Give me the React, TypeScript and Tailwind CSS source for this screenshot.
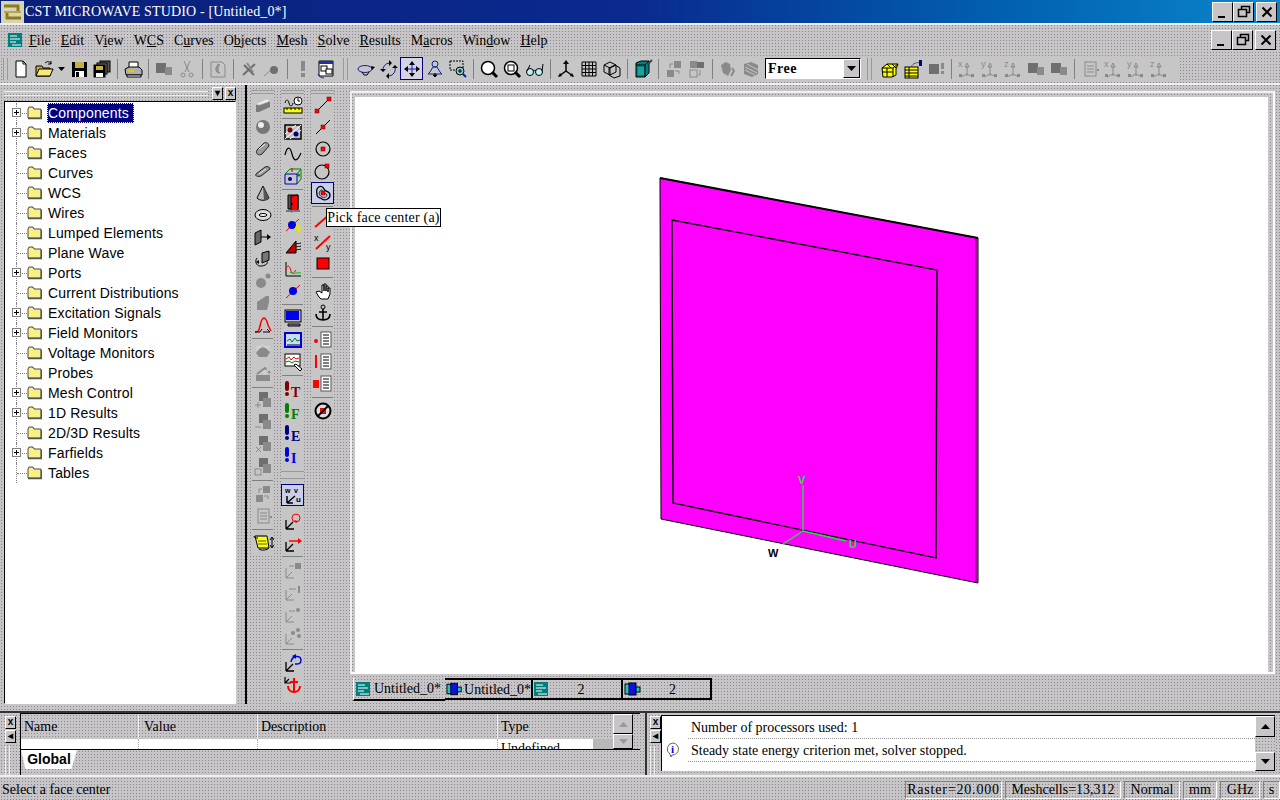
import type { ReactNode } from "react";

const dither = "bg-[#c8c5c8] bg-[radial-gradient(#8a878a_0.8px,transparent_0.9px)] bg-[length:3px_3px]";
const toolBg = "bg-[#c6c6c6] bg-[radial-gradient(#eef8ee_0.5px,transparent_0.6px)] bg-[length:6px_6px]";
const raised = "border border-t-white border-l-white border-r-black border-b-black";
const serif = "font-['Liberation_Serif',serif]";
const sans = "font-['Liberation_Sans',sans-serif]";

const S = ({ children, w = 20 }: { children: ReactNode; w?: number }) => (
    <svg width={w} height={20} viewBox={`0 0 ${w} 20`} fill="none" stroke="#000" strokeWidth={1}>
        {children}
    </svg>
);

const G = "#8a8a8a";
const D = "#6f6f6f";

// disabled two-square glyph used all over the grey buttons
const Grey = ({ kind = 0 }: { kind?: number }) => (
    <S>
        {kind === 0 && <><rect x="8" y="3" width="9" height="8" fill={G} stroke="none" /><rect x="3" y="8" width="9" height="9" fill={D} stroke="none" /></>}
        {kind === 1 && <><rect x="10" y="2" width="7" height="7" fill={G} stroke="none" /><rect x="3" y="11" width="7" height="7" fill={G} stroke="none" /><path d="M6 9V5h3M11 12h4v3" stroke={G} /></>}
        {kind === 2 && <><rect x="3" y="2" width="7" height="7" fill={G} stroke="none" /><rect x="10" y="3" width="7" height="6" fill={D} stroke="none" /><rect x="3" y="11" width="7" height="7" stroke={G} /><path d="M13 11v5h-2" stroke={G} /></>}
        {kind === 3 && <><path d="M3 6l5-3 4 2 1 6-3 6-5-3z" fill={G} stroke="none" /><path d="M14 9l2 3-3 5" stroke={G} strokeWidth={2} /></>}
        {kind === 4 && <><path d="M3 5l7-2 7 3v9l-6 3-8-3z" fill={G} stroke="none" /><path d="M4 8l12 6M4 11l10 5M6 5l11 6" stroke="#c6c6c6" /></>}
        {kind === 5 && <><rect x="2" y="4" width="10" height="10" fill={D} stroke="none" /><rect x="11" y="8" width="7" height="8" fill={G} stroke="none" /></>}
        {kind === 6 && <><rect x="5" y="3" width="11" height="14" stroke={G} /><path d="M7 7h7M7 10h7M7 13h7" stroke={G} /><rect x="17" y="10" width="2" height="2" fill={G} stroke="none" /></>}
    </S>
);

const GreyAxes = ({ l }: { l: string }) => (
    <S>
        <path d="M10 17V7M10 4l-2 4h4zM10 15l-6 3M10 15l6 3" stroke={G} />
        <rect x="2" y="15" width="3" height="3" fill={G} stroke="none" />
        <rect x="14" y="15" width="3" height="3" fill={G} stroke="none" />
        <text x="1" y="8" fontSize="9" fill={G} stroke="none" fontFamily="Liberation Sans">{l}</text>
    </S>
);

const Doc = () => <S><path d="M5 2h7l3 3v13H5z" fill="#fff" /><path d="M12 2v3h3" /></S>;
const Open = () => (
    <S>
        <path d="M2 7h6l1 2h7v8H2z" fill="#c8b040" />
        <path d="M2 17l3-7h14l-3 7z" fill="#f8e878" />
        <path d="M11 4c2-2 5-2 6 1M17 2v3h-3" stroke="#000" />
    </S>
);
const Save = () => (
    <S>
        <rect x="3" y="3" width="15" height="15" fill="#000" stroke="none" />
        <rect x="6" y="3" width="9" height="6" fill="#c8b040" stroke="none" />
        <rect x="6" y="12" width="9" height="6" fill="#fff" stroke="none" />
        <rect x="7" y="13" width="3" height="5" fill="#000" stroke="none" />
    </S>
);
const SaveAll = () => (
    <S>
        <rect x="8" y="2" width="10" height="11" fill="#555" />
        <rect x="5" y="4" width="10" height="11" fill="#777" />
        <rect x="2" y="6" width="11" height="12" fill="#000" />
        <rect x="4" y="7" width="7" height="4" fill="#c8b040" stroke="none" />
        <rect x="4" y="14" width="7" height="4" fill="#fff" stroke="none" />
    </S>
);
const Print = () => (
    <S>
        <path d="M6 3h9v6H6z" fill="#fff" />
        <path d="M2 10l4-2h10l3 3v5H3z" fill="#b0b0b0" />
        <rect x="5" y="11" width="6" height="2" fill="#d8d000" stroke="none" />
        <path d="M4 16h14v2H4z" fill="#fff" />
    </S>
);
const Scissors = () => <S><path d="M7 2l5 11M13 2L8 13" stroke={G} /><circle cx="6" cy="16" r="2" stroke={G} /><circle cx="14" cy="16" r="2" stroke={G} /></S>;
const UndoDoc = () => <S><path d="M3 3h11l3 3v12H3z" stroke={G} /><path d="M12 6a4 4 0 1 0 0 8M10 5v8" stroke={G} strokeWidth={1.5} /></S>;
const GX = () => <S><path d="M4 16L16 5M5 6l10 10" stroke={D} strokeWidth={2} /><path d="M8 4l6 9" stroke={G} strokeWidth={2} /></S>;
const GArrow = () => <S><path d="M2 17l8-7" stroke={G} /><circle cx="12" cy="11" r="4" fill={D} stroke="none" /></S>;
const GBang = () => <S><rect x="8" y="2" width="4" height="10" fill={G} stroke="none" /><rect x="8" y="14" width="4" height="4" fill={G} stroke="none" /></S>;
const Nodes = () => (
    <S>
        <path d="M3 2h14v15H3z" fill="#fff" stroke="#000" />
        <path d="M3 2h14v3H3z" fill="#2030a0" stroke="none" />
        <rect x="5" y="7" width="6" height="5" fill="#fff" />
        <rect x="10" y="10" width="6" height="5" fill="#fff" />
        <path d="M2 15c1 3 4 4 6 4" stroke="#2030a0" />
    </S>
);
const Orbit = () => (
    <S>
        <ellipse cx="9" cy="10" rx="7" ry="3.5" stroke="#1020a0" />
        <path d="M6 13l2 3h3l2-3" stroke="#000" />
        <path d="M15 7l4 1-3 3z" fill="#000" stroke="none" />
    </S>
);
const Rot = () => <S><path d="M4 12a7 7 0 0 1 6-8M16 8a7 7 0 0 1-6 9" stroke="#1020a0" /><path d="M10 1v6l3-3zM10 14v6l-3-3zM1 10h6l-3 3zM13 9l6 0-3-3z" fill="#000" stroke="none" /></S>;
const Move = () => (
    <S>
        <path d="M10 2l3 4H7zM10 18l3-4H7zM2 10l4-3v6zM18 10l-4-3v6z" fill="#000" stroke="none" />
        <path d="M10 5v10M5 10h10" stroke="#1020a0" />
    </S>
);
const Pawn = () => <S><circle cx="10" cy="5" r="3" stroke="#1020a0" /><path d="M8 8h4l3 5 2 2H3l2-2z" stroke="#1020a0" /><path d="M10 14v4l-2-2h4l-2 2" fill="#000" /></S>;
const ZoomBox = () => <S><rect x="2" y="2" width="13" height="9" strokeDasharray="2 1" /><circle cx="12" cy="12" r="4" fill="#80d0d0" /><path d="M10 12h4M12 10v4" /><path d="M15 15l3 3" stroke="#1020a0" strokeWidth={2} /></S>;
const Glass = () => <S><circle cx="9" cy="9" r="6.5" fill="#fff" strokeWidth={1.5} /><path d="M13 13l5 5" strokeWidth={3} /></S>;
const GlassFit = () => <S><circle cx="9" cy="9" r="6.5" fill="#fff" strokeWidth={1.5} /><rect x="6" y="6" width="6" height="6" /><path d="M13 13l5 5" strokeWidth={3} /></S>;
const Specs = () => <S><circle cx="5" cy="13" r="3.5" fill="#bfefef" /><circle cx="14" cy="13" r="3.5" fill="#bfefef" /><path d="M8 12c1-1 2-1 3 0M2 12l3-6M17 12l1-7" /></S>;
const Axes3 = () => <S><path d="M10 12V3M10 12l-7 5M10 12l7 5" strokeWidth={1.5} /><path d="M10 1l-3 4h6zM2 18l2-4 2 3zM18 18l-2-4-2 3z" fill="#000" stroke="none" /></S>;
const Grid = () => <S><path d="M3 3h14v14H3zM3 6.500h14M3 10h14M3 13.500h14M6.500 3v14M10 3v14M13.500 3v14" /></S>;
const Cubes = () => <S><path d="M2 6l6-3 6 3v7l-6 3-6-3zM2 6l6 3 6-3M8 9v7" /><path d="M7 9l6-3 5 3v8l-6 2-5-3z" /></S>;
const TealCube = () => <S><path d="M3 4l5-2h8v12l-4 4H3z" fill="#008080" /><path d="M3 6h9v12M12 6l4-4" /><path d="M15 5l4-4" stroke="#444" strokeWidth={2} /><rect x="5" y="8" width="6" height="8" fill="#20a0a0" stroke="none" /></S>;
const YellowCubes = () => <S><path d="M2 9l5-4h11l-2 5v6l-4 2H3z" fill="#ffff00" /><path d="M2 9h11v9M13 9l5-4M2 13h11M7 9v9M7 5l4 4M12 5l4 4" /></S>;
const YellowSheet = () => <S><rect x="2" y="8" width="13" height="11" fill="#ffff00" /><path d="M2 11h13M2 14h13M2 17h13M6 8v11" /><path d="M8 8c2-4 6-5 9-4" stroke="#555" /><rect x="16" y="1" width="3" height="6" fill="#000090" stroke="none" /></S>;
const GreyBang = () => <S><rect x="3" y="5" width="10" height="10" fill={D} stroke="none" /><rect x="15" y="4" width="3" height="6" fill={G} stroke="none" /><rect x="15" y="12" width="3" height="3" fill={G} stroke="none" /></S>;

// modeling column
const Box = () => <S><path d="M3 9l11-5 3 2v6L6 17H3z" fill="#7a7a7a" stroke="none" /><path d="M3 9l11-5 3 2-11 4z" fill="#f4f4f4" stroke="#ccc" /></S>;
const Ball = () => <S><circle cx="10" cy="10" r="7" fill="#777" stroke="none" /><circle cx="8" cy="8" r="3" fill="#eee" stroke="none" /></S>;
const Cyl = () => <S><path d="M4 11l7-7c2-1 5 0 5 3l-7 8c-3 2-7 0-5-4z" fill="#9a9a9a" stroke="#222" /><path d="M6 10l6-5" stroke="#eee" /></S>;
const Cyl2 = () => <S><path d="M3 13l9-7c3-1 5 0 5 2l-9 7c-4 1-6 0-5-2z" fill="#9a9a9a" stroke="#222" /><path d="M6 13l7-5" stroke="#eee" /></S>;
const Cone = () => <S><path d="M10 3l6 12c-2 3-10 3-12 0z" fill="#bbb" /><path d="M10 3l6 12c-2 2-4 2-5 2z" fill="#555" stroke="none" /></S>;
const Torus = () => <S><ellipse cx="10" cy="10" rx="8" ry="5.500" fill="#ddd" /><ellipse cx="10" cy="10" rx="4" ry="1.500" fill="#fff" /></S>;
const Extrude = () => <S><path d="M2 6l6-3v12l-6 3z" fill="#666" /><path d="M8 10h8" /><path d="M18 10l-4-3v6z" fill="#000" stroke="none" /></S>;
const Revolve = () => <S><path d="M9 4l7-2v9l-7 3z" fill="#777" /><path d="M4 9c-3 4 0 9 5 8s6-3 5-5" /><path d="M3 13l3-2v4z" fill="#000" stroke="none" /></S>;
const GDots = () => <S><circle cx="8" cy="12" r="5" fill={G} stroke="none" /><circle cx="15" cy="5" r="2.500" fill={G} stroke="none" /></S>;
const GShape = () => <S><path d="M4 17V9l9-6h3v6l-2 8z" fill={G} stroke="none" /></S>;
const Loft = () => <S><path d="M2 17c3 0 4-1 5-6s2-8 4-8 3 3 4 7l3 6" stroke="#f00" strokeWidth={1.5} /><path d="M2 17h5l2-3M10 17h7l-3-3" /></S>;
const GBoolA = () => <S><path d="M3 11l7-8 7 7-3 5H6z" fill={G} stroke="none" /><path d="M3 5h14M3 8l7-5 7 6" stroke="#ddd" /></S>;
const GBoolB = () => <S><path d="M3 11h14v6H3z" fill={G} stroke="none" /><path d="M4 10l8-6 5 5" stroke={G} strokeWidth={2} /><path d="M9 9l6-4M11 10l5-4" stroke="#ddd" /></S>;
const GStack = ({ m }: { m?: string }) => (
    <S>
        <rect x="6" y="1" width="9" height="9" fill={D} stroke="none" />
        <rect x="10" y="7" width="8" height="9" fill={G} stroke="none" />
        {m === "+" && <path d="M2 14h6M5 11v6" stroke={G} />}
        {m === "-" && <path d="M2 14h6" stroke={G} />}
        {m === "x" && <path d="M3 12l5 5M8 12l-5 5" stroke={G} />}
        {m === "o" && <rect x="2" y="12" width="6" height="6" stroke={G} />}
    </S>
);
const Scroll = () => <S w={22}><path d="M3 3h12l2 12H6z" fill="#ffff00" /><path d="M2 3c0 2 2 2 4 2M7 16c2 2 9 1 10-1" /><path d="M3 3h12M6 8h8M6 11h9" stroke="#555" /><path d="M20 5v9M18 7l2-3 2 3M18 12l2 3 2-3" stroke="#000" /></S>;

// solver column
const Ruler = () => <S w={22}><path d="M3 8c1-4 3-4 4 0s3 4 4 0" /><circle cx="16" cy="6" r="4" fill="#fff" /><path d="M16 3v3h2" /><rect x="2" y="13" width="18" height="5" fill="#ffff00" /><path d="M5 13v2M9 13v2M13 13v2M17 13v2" /></S>;
const Slash = () => <S><rect x="2" y="3" width="16" height="14" fill="#c0c0c0" strokeWidth={1.5} /><path d="M2 17L18 3M2 12L13 3M7 17L18 8" stroke="#fff" /><circle cx="7" cy="8" r="2.500" fill="#800000" stroke="none" /><circle cx="13" cy="12" r="2.500" fill="#000080" stroke="none" /></S>;
const Wave = () => <S><path d="M2 11c2-9 5-9 7-1s5 8 9-1" strokeWidth={1.2} /></S>;
const Cube3 = () => <S><path d="M2 8h12v10H2z" stroke="#0000c0" /><path d="M2 8l5-5h11l-4 5M14 18l4-5V3" stroke="#008000" /><circle cx="7" cy="13" r="2" fill="#000080" stroke="none" /><circle cx="15.500" cy="9" r="1.500" fill="#008000" stroke="none" /><path d="M9 2v4" stroke="#c00000" /></S>;
const Door = () => <S><path d="M5 2h10v14H5z" fill="#555" /><path d="M8 3l7-1v15l-7 2z" fill="#f00" stroke="#000" /><circle cx="9" cy="11" r="1" fill="#000" stroke="none" /><path d="M3 18h14" stroke="#777" strokeWidth={2} /></S>;
const Port = () => <S><path d="M3 16L16 4" stroke="#f00" /><circle cx="9" cy="10" r="4" fill="#0000e0" stroke="none" /><path d="M15 9l-2 4h4l-2 5" stroke="#e8e800" strokeWidth={2} /></S>;
const Mono = () => <S><path d="M3 16L13 4v12z" fill="#c00000" stroke="#000" /><path d="M13 7c2-1 3 0 5-1M13 10c2-1 3 0 5-1M13 13c2-1 3 0 5-1" /></S>;
const Probe = () => <S><path d="M3 3v14h15" /><path d="M3 10c2-6 4-2 5 2s3 2 5-1" stroke="#f00" /><path d="M7 13c3 3 6 0 11 1" stroke="#00c000" /></S>;
const PortB = () => <S><path d="M3 17L17 4" stroke="#f00" /><circle cx="10" cy="10" r="4" fill="#0000e0" stroke="none" /></S>;
const Monitor = () => <S><rect x="2" y="2" width="16" height="12" fill="#c0c0c0" /><rect x="3" y="3" width="13" height="9" fill="#0000f0" stroke="none" /><path d="M5 16h12v2H5z" fill="#888" /></S>;
const Scope = () => <S><rect x="2" y="3" width="16" height="14" fill="#c8dcff" stroke="#0000e0" strokeWidth={2} /><path d="M4 11l3-2 2 3 3-4 2 3 3-1" stroke="#008000" /><path d="M4 15h13" stroke="#000" /></S>;
const ScopePick = () => <S><rect x="2" y="2" width="15" height="12" fill="#fff" /><path d="M3 7l3-2 2 3 3-3 2 2 3-1" stroke="#f00" /><path d="M3 10l3-1 3 2 3-2 4 1" stroke="#008000" /><path d="M11 13l6 6 2-2-6-5z" fill="#fff" /></S>;
const Run = ({ l, c }: { l: string; c: string }) => (
    <S>
        <rect x="2" y="2" width="4" height="10" rx="2" fill={c} stroke="none" />
        <circle cx="4" cy="15" r="2" fill={c} stroke="none" />
        <text x="8" y="18" fontSize="14" fontWeight="bold" fontFamily="Liberation Serif" fill={c} stroke="none">{l}</text>
    </S>
);
const Wcs = () => <S><path d="M4 18l8-7M4 18h6M4 18v-7" strokeWidth={1.5} /><text x="2" y="8" fontSize="7" fill="#000" stroke="none" fontFamily="Liberation Sans" fontWeight="bold">w</text><text x="11" y="8" fontSize="7" fill="#000" stroke="none" fontFamily="Liberation Sans" fontWeight="bold">v</text><text x="13" y="17" fontSize="8" fill="#000" stroke="none" fontFamily="Liberation Sans" fontWeight="bold">u</text></S>;
const LocalAxes = ({ children }: { children: ReactNode }) => <S><path d="M3 18h8M3 18V9M3 18l7-7" strokeWidth={1.3} />{children}</S>;
const GAxes = ({ children }: { children: ReactNode }) => <S><path d="M3 18h8M3 18V8M3 18l6-6" stroke={G} />{children}</S>;
const Anchor = ({ c = "#000" }: { c?: string }) => <S><circle cx="10" cy="4" r="2" stroke={c} /><path d="M10 6v11M6 9h8M3 11c0 4 3 6 7 6s7-2 7-6" stroke={c} strokeWidth={1.6} /></S>;

// pick column
const Dot = ({ x, y }: { x: number; y: number }) => <rect x={x - 2} y={y - 2} width="4" height="4" fill="#f00" stroke="#600" strokeWidth={0.5} />;
const PickLine = () => <S><path d="M4 16L16 4" /><Dot x={4} y={16} /><Dot x={16} y={4} /></S>;
const PickMid = () => <S><path d="M3 17L17 3" /><Dot x={10} y={10} /></S>;
const PickCircle = () => <S><circle cx="10" cy="10" r="7" strokeWidth={1.2} /><Dot x={10} y={10} /></S>;
const PickEdge = () => <S><circle cx="9" cy="11" r="7" strokeWidth={1.2} /><Dot x={14} y={5} /></S>;
const PickFace = () => <S><path d="M4 6c2-4 6-3 7 0s6 2 6 6-5 6-8 4-5-1-5-4-1-3 0-6z" strokeWidth={1.3} /><path d="M7 8c1-2 3-1 3 1s4 1 4 3-3 3-5 2-4-3-2-6z" strokeWidth={0.8} /><Dot x={10} y={10} /></S>;
const RedLine = () => <S><path d="M2 17L16 5" stroke="#f00" strokeWidth={2} /></S>;
const XY = () => <S><path d="M3 17L17 4" stroke="#f00" strokeWidth={2} /><text x="1" y="9" fontSize="9" fill="#000" stroke="none" fontFamily="Liberation Sans">x</text><text x="13" y="18" fontSize="9" fill="#000" stroke="none" fontFamily="Liberation Sans">y</text></S>;
const RedSq = () => <S><rect x="4" y="4" width="12" height="11" fill="#f00" /></S>;
const Hand = () => <S><path d="M3 11l3 5 2 2h7l2-5V7h-2v4-6h-2v5V3h-2v7V4H9v8L6 10z" fill="#fff" /></S>;
const List = ({ m }: { m: number }) => (
    <S>
        {m === 0 && <circle cx="3" cy="11" r="2" fill="#f00" stroke="none" />}
        {m === 1 && <rect x="2" y="3" width="2" height="13" fill="#f00" stroke="none" />}
        {m === 2 && <rect x="0" y="6" width="6" height="8" fill="#f00" stroke="none" />}
        <rect x="8" y="2" width="10" height="15" fill="#fff" stroke="#555" />
        <path d="M10 5h6M10 8h6M10 11h6M10 14h6" />
    </S>
);
const NoGo = () => <S><circle cx="10" cy="10" r="7.500" fill="#ddd" strokeWidth={2} /><rect x="7" y="7" width="6" height="6" fill="#f00" stroke="none" /><path d="M5 15L15 5" strokeWidth={1.8} /></S>;

const Cell = ({ children, on }: { children: ReactNode; on?: boolean }) => (
    <div className={`flex h-[22px] w-[23px] items-center justify-center ${on ? "border border-[#000080] bg-[#c9cfe8]" : ""}`}>
        {children}
    </div>
);
const Sep = () => <div className="mx-[1px] my-[2px] h-px bg-[#808080]" />;
const Grip = () => <div className="h-[4px] border-y border-[#999]" />;

type Item = ReactNode | null;

const col1: Item[] = [<Box />, <Ball />, <Cyl />, <Cyl2 />, <Cone />, <Torus />, <Extrude />, <Revolve />, <GDots />, <GShape />, <Loft />, null, <GBoolA />, <GBoolB />, null, <GStack m="+" />, <GStack m="-" />, <GStack m="x" />, <GStack m="o" />, null, <Grey kind={1} />, <Grey kind={6} />, null, <Scroll />];
const col2Top: Item[] = [<Ruler />, null, <Slash />, <Wave />, <Cube3 />, null, <Door />, <Port />, <Mono />, <Probe />, <PortB />, null, <Monitor />, <Scope />, <ScopePick />, null, <Run l="T" c="#800000" />, <Run l="F" c="#008000" />, <Run l="E" c="#000080" />, <Run l="I" c="#0000e0" />];
const col2Bottom: Item[] = [
    <LocalAxes><circle cx="13" cy="7" r="4" stroke="#f00" /><path d="M11 9l4 1-2 2z" fill="#f00" stroke="none" /></LocalAxes>,
    <LocalAxes><path d="M6 8h11" stroke="#f00" strokeWidth={1.5} /><path d="M19 8l-4-3v6z" fill="#f00" stroke="none" /></LocalAxes>,
    null,
    <GAxes><rect x="12" y="3" width="6" height="6" fill={G} stroke="none" /><path d="M6 6h5" stroke={G} /></GAxes>,
    <GAxes><rect x="15" y="4" width="2" height="7" fill={G} stroke="none" /><path d="M6 7h7" stroke={G} /></GAxes>,
    <GAxes><circle cx="15" cy="6" r="2" fill={G} stroke="none" /><path d="M6 7h6" stroke={G} /></GAxes>,
    <GAxes><circle cx="10" cy="7" r="2" fill={G} stroke="none" /><circle cx="15" cy="4" r="2" fill={G} stroke="none" /><circle cx="16" cy="10" r="2" fill={G} stroke="none" /></GAxes>,
    null,
    <LocalAxes><path d="M8 9c1-7 10-7 10-2s-4 4-6 4" stroke="#0000e0" strokeWidth={1.5} /><path d="M9 3l4-2v5z" fill="#0000e0" stroke="none" /></LocalAxes>,
    <S><path d="M2 2v6h6M2 8l4-4" strokeWidth={1.2} /><path d="M11 3v13M7 7h8M5 11c0 4 3 6 6 6s6-2 6-6" stroke="#f00" strokeWidth={2} /></S>,
];
const col3: Item[] = [<PickLine />, <PickMid />, <PickCircle />, <PickEdge />, <PickFace />, null, <RedLine />, <XY />, <RedSq />, null, <Hand />, <Anchor />, null, <List m={0} />, <List m={1} />, <List m={2} />, null, <NoGo />];

const Col = ({ items, active }: { items: Item[]; active?: number }) => (
    <>
        {items.map((it, i) => (it === null ? <Sep key={i} /> : <Cell key={i} on={i === active}>{it}</Cell>))}
    </>
);

const TbSep = () => <div className="mx-[3.5px] h-[20px] w-px bg-[#808080]" />;
const Tb = ({ children, on }: { children: ReactNode; on?: boolean }) => (
    <div className={`flex h-[23px] w-[23px] shrink-0 items-center justify-center ${on ? "border border-[#000080] bg-[#d4d4e4]" : ""}`}>
        {children}
    </div>
);
const VGrip = () => <div className="mx-[6px] h-[22px] w-[5px] border-x border-[#999]" />;

const WinBtn = ({ kind }: { kind: "min" | "max" | "close" }) => (
    <div className={`flex h-[20px] w-[21px] items-center justify-center bg-[#c8c5c8] ${raised}`}>
        <svg width="14" height="14" viewBox="0 0 14 14" fill="none" stroke="#000" strokeWidth="1.5">
            {kind === "min" && <path d="M2 12h7" strokeWidth="2" />}
            {kind === "max" && <><path d="M4.500 4V1.500h8v6H10" /><rect x="1.500" y="4.500" width="8" height="7" /></>}
            {kind === "close" && <path d="M2.500 2.500l9 9M11.500 2.500l-9 9" strokeWidth="2" />}
        </svg>
    </div>
);

const Folder = () => (
    <svg width="15" height="14" viewBox="0 0 15 14" stroke="#000" strokeWidth="0.7">
        <path d="M1 3l1-2h4l1 2h7v9H1z" fill="#f8f088" />
        <path d="M1 12.500h13.500V4" fill="none" stroke="#555" strokeWidth="1.4" />
    </svg>
);

const TreeRow = ({ label, plus, sel }: { label: string; plus?: boolean; sel?: boolean }) => (
    <div className="flex h-5 items-center">
        <div className="relative ml-[11px] flex h-5 w-[11px] items-center border-l border-dotted border-[#808080]">
            <div className="h-px w-full border-t border-dotted border-[#808080]" />
            {plus && (
                <div className="absolute left-[-5px] top-[5px] flex h-[9px] w-[9px] items-center justify-center border border-[#808080] bg-white text-[#000]">
                    <div className="relative h-[5px] w-[5px]">
                        <div className="absolute left-0 top-[2px] h-px w-[5px] bg-black" />
                        <div className="absolute left-[2px] top-0 h-[5px] w-px bg-black" />
                    </div>
                </div>
            )}
        </div>
        <div className="flex w-[20px] items-center">
            <Folder />
        </div>
        <span className={`border pr-[4px] text-[14px] leading-[18px] tracking-[0.15px] ${sans} ${sel ? "border-dotted border-[#ffff80] bg-[#000080] text-white" : "border-transparent text-black"}`}>
            {label}
        </span>
    </div>
);

const treeItems = [
    { label: "Components", plus: true, sel: true },
    { label: "Materials", plus: true },
    { label: "Faces" },
    { label: "Curves" },
    { label: "WCS" },
    { label: "Wires" },
    { label: "Lumped Elements" },
    { label: "Plane Wave" },
    { label: "Ports", plus: true },
    { label: "Current Distributions" },
    { label: "Excitation Signals", plus: true },
    { label: "Field Monitors", plus: true },
    { label: "Voltage Monitors" },
    { label: "Probes" },
    { label: "Mesh Control", plus: true },
    { label: "1D Results", plus: true },
    { label: "2D/3D Results" },
    { label: "Farfields", plus: true },
    { label: "Tables" },
];

const TabIcon = ({ alt }: { alt?: boolean }) =>
    alt ? (
        <svg width="18" height="14" viewBox="0 0 18 14" stroke="#000">
            <rect x="1" y="2" width="5" height="10" fill="#20c0d0" />
            <rect x="5" y="1" width="7" height="12" fill="#1010e0" />
            <rect x="12" y="5" width="4" height="5" fill="#20c0d0" />
        </svg>
    ) : (
        <svg width="14" height="14" viewBox="0 0 14 14">
            <rect x="0" y="0" width="14" height="14" fill="#007f7f" />
            <path d="M2 3h7M2 6h10M2 9h6M4 12h9" stroke="#fff" />
        </svg>
    );

const DocTab = ({ label, alt, active, w }: { label: string; alt?: boolean; active?: boolean; w: string }) => (
    <div className={`flex items-center gap-[1px] text-[14px] text-black ${serif} ${w} ${active ? "h-[23px] gap-[4px] border-b-2 border-l border-b-black border-l-white px-[2px]" : "h-[22px] border-y-2 border-r-2 border-black pl-[1px]"}`}>
        <TabIcon alt={alt} />
        <span className={label === "2" ? "flex-1 pr-[8px] text-center" : "whitespace-nowrap"}>{label}</span>
    </div>
);

const SmallBtn = ({ label }: { label: string }) => (
    <div className={`flex h-[13px] w-[11px] items-center justify-center bg-[#c8c5c8] text-[10px] font-bold leading-none ${sans} ${raised}`}>
        {label}
    </div>
);

const ScrollBtn = ({ up, muted, h }: { up?: boolean; muted?: boolean; h: string }) => (
    <div className={`flex w-[20px] shrink-0 items-center justify-center bg-[#c8c5c8] ${h} ${raised}`}>
        <svg width="9" height="5" viewBox="0 0 9 5">
            <path d={up ? "M4.500 0L9 5H0z" : "M4.500 5L9 0H0z"} fill={muted ? "#999" : "#000"} />
        </svg>
    </div>
);

const StatusCell = ({ label, w }: { label: string; w: string }) => (
    <div className={`flex h-[18px] items-center justify-center border-l border-t border-l-[#808080] border-t-[#808080] border-r border-b border-r-white border-b-white text-[14px] ${w}`}>
        {label}
    </div>
);

export default function App() {
    return (
        <div className={`flex h-[800px] w-[1280px] flex-col overflow-hidden ${dither} ${serif} text-black`}>
            {/* Title bar */}
            <div className="flex h-[23px] shrink-0 items-center justify-between bg-gradient-to-r from-[#0a1f7a] via-[#0a2a90] to-[#0d86cc] pr-[3px]">
                <div className="flex items-center">
                    <svg width="23" height="22" viewBox="0 0 23 22" className="ml-[1px]">
                        <rect x="0" y="0" width="23" height="22" fill="#d8d4b8" />
                        <path d="M3 5h14v5M20 17H6v-5" fill="none" stroke="#8a7a20" strokeWidth="3" />
                        <path d="M3 10h17v2H3z" fill="#b8a840" />
                    </svg>
                    <span className="ml-[1px] whitespace-nowrap text-[14px] tracking-[0.15px] text-white">CST MICROWAVE STUDIO - [Untitled_0*]</span>
                </div>
                <div className="flex items-center">
                    <WinBtn kind="min" />
                    <WinBtn kind="max" />
                    <div className="w-[2px]" />
                    <WinBtn kind="close" />
                </div>
            </div>

            {/* Menu bar */}
            <div className="flex h-[31px] shrink-0 items-center justify-between border-t-2 border-[#efefef] pl-[8px] pr-[4px]">
                <div className="flex items-center pt-[1px] text-[14px]">
                    <div className="mr-[7px]"><TabIcon /></div>
                    <div className="flex gap-[10px]">
                        <span><u>F</u>ile</span>
                        <span><u>E</u>dit</span>
                        <span>V<u>i</u>ew</span>
                        <span>W<u>C</u>S</span>
                        <span>C<u>u</u>rves</span>
                        <span>O<u>b</u>jects</span>
                        <span><u>M</u>esh</span>
                        <span><u>S</u>olve</span>
                        <span><u>R</u>esults</span>
                        <span>M<u>a</u>cros</span>
                        <span>Win<u>d</u>ow</span>
                        <span><u>H</u>elp</span>
                    </div>
                </div>
                <div className="flex items-center">
                    <WinBtn kind="min" />
                    <WinBtn kind="max" />
                    <div className="w-[2px]" />
                    <WinBtn kind="close" />
                </div>
            </div>

            {/* Toolbar */}
            <div className="flex h-[29px] shrink-0 items-center pl-[2px]">
                <div className={`flex h-[26px] w-[1178px] items-center ${toolBg}`}>
                    <div className="ml-[1px] mr-[1px] h-[22px] w-[5px] border-x border-[#999]" />
                    <Tb><Doc /></Tb>
                    <Tb><Open /></Tb>
                    <div className="flex h-[23px] w-[12px] items-center justify-center">
                        <svg width="7" height="4" viewBox="0 0 7 4"><path d="M0 0h7L3.500 4z" fill="#000" /></svg>
                    </div>
                    <Tb><Save /></Tb>
                    <Tb><SaveAll /></Tb>
                    <TbSep />
                    <Tb><Print /></Tb>
                    <TbSep />
                    <Tb><Grey kind={5} /></Tb>
                    <Tb><Scissors /></Tb>
                    <TbSep />
                    <Tb><UndoDoc /></Tb>
                    <TbSep />
                    <Tb><GX /></Tb>
                    <Tb><GArrow /></Tb>
                    <TbSep />
                    <Tb><GBang /></Tb>
                    <Tb><Nodes /></Tb>
                    <VGrip />
                    <Tb><Orbit /></Tb>
                    <Tb><Rot /></Tb>
                    <Tb on><Move /></Tb>
                    <Tb><Pawn /></Tb>
                    <Tb><ZoomBox /></Tb>
                    <TbSep />
                    <Tb><Glass /></Tb>
                    <Tb><GlassFit /></Tb>
                    <Tb><Specs /></Tb>
                    <TbSep />
                    <Tb><Axes3 /></Tb>
                    <Tb><Grid /></Tb>
                    <Tb><Cubes /></Tb>
                    <TbSep />
                    <Tb><TealCube /></Tb>
                    <TbSep />
                    <Tb><Grey kind={1} /></Tb>
                    <Tb><Grey kind={2} /></Tb>
                    <TbSep />
                    <Tb><Grey kind={3} /></Tb>
                    <Tb><Grey kind={4} /></Tb>
                    {/* view mode combo */}
                    <div className="ml-[3px] flex h-[21px] w-[96px] shrink-0 items-center justify-between border border-b-white border-l-black border-r-white border-t-black bg-white pl-[2px] text-[14px] font-bold tracking-[0.5px]">
                        Free
                        <div className={`flex h-[19px] w-[17px] items-center justify-center bg-[#c8c5c8] ${raised}`}>
                            <svg width="9" height="5" viewBox="0 0 9 5"><path d="M0 0h9L4.500 5z" fill="#000" /></svg>
                        </div>
                    </div>
                    <VGrip />
                    <Tb><YellowCubes /></Tb>
                    <Tb><YellowSheet /></Tb>
                    <Tb><GreyBang /></Tb>
                    <TbSep />
                    <Tb><GreyAxes l="x" /></Tb>
                    <Tb><GreyAxes l="y" /></Tb>
                    <Tb><GreyAxes l="z" /></Tb>
                    <Tb><Grey kind={5} /></Tb>
                    <Tb><Grey kind={5} /></Tb>
                    <TbSep />
                    <Tb><Grey kind={6} /></Tb>
                    <Tb><GreyAxes l="x" /></Tb>
                    <Tb><GreyAxes l="y" /></Tb>
                    <Tb><GreyAxes l="z" /></Tb>
                </div>
            </div>

            {/* Main area */}
            <div className="flex h-[628px] shrink-0 border-t-2 border-[#efefef]">
                {/* Navigation tree */}
                <div className="flex w-[240px] shrink-0 flex-col pb-[7px] pl-[4px] pr-[4px]">
                    <div className="flex h-[16px] shrink-0 items-center justify-end gap-[2px]">
                        <div className="mr-[2px] h-[5px] flex-1 border-y border-[#eee]" />
                        <SmallBtn label="▾" />
                        <SmallBtn label="x" />
                    </div>
                    <div className="flex-1 border border-b-white border-l-black border-r-white border-t-black bg-white pt-[1px]">
                        {treeItems.map((t) => (
                            <TreeRow key={t.label} label={t.label} plus={t.plus} sel={t.sel} />
                        ))}
                    </div>
                </div>

                {/* Palettes */}
                <div className="mb-[7px] ml-[5px] flex w-[96px] shrink-0 gap-[7px] border-l-2 border-black pl-[4px] pt-[5px]">
                    <div className={`h-[465px] w-[23px] ${toolBg}`}>
                        <Grip />
                        <Col items={col1} />
                    </div>
                    <div className={`h-[612px] w-[23px] ${toolBg}`}>
                        <Grip />
                        <Col items={col2Top} />
                        <div className="my-[5px] h-[8px] border-y border-[#999]" />
                        <Cell on><Wcs /></Cell>
                        <div className="h-[4px]" />
                        <Col items={col2Bottom} />
                    </div>
                    <div className={`h-[330px] w-[23px] ${toolBg}`}>
                        <Grip />
                        <Col items={col3} active={4} />
                    </div>
                </div>

                {/* Viewport */}
                <div className="ml-[9px] flex w-[925px] shrink-0 flex-col pt-[6px]">
                    <div className="h-[583px] border-2 border-b-white border-l-[#efefef] border-r-white border-t-[#efefef] pl-[3px] pt-[4px]">
                        <div className="h-[575px] w-[913px] bg-white">
                            <svg width="913" height="575" viewBox="355 97 913 575">
                                <polygon points="660,178 978,238 978,583 661,519" fill="#ff00ff" stroke="#000" />
                                <polygon points="975,237 978,238 978,583 975,582" fill="#a000a0" />
                                <path d="M660 178L978 238" stroke="#000" strokeWidth="2" />
                                <polygon points="672,220 937,270 936,558 673,503" fill="#ff00ff" stroke="#000" strokeWidth="1.4" />
                                <path d="M803 531V485M803 531L783 544" stroke="#20e040" strokeWidth="1.4" />
                                <path d="M803 531L846 541" stroke="#20e040" strokeWidth="1.4" />
                                <text x="798" y="484" fontSize="11" fill="#20e040" fontFamily="Liberation Sans" fontWeight="bold">V</text>
                                <text x="849" y="548" fontSize="11" fill="#20e040" fontFamily="Liberation Sans" fontWeight="bold">U</text>
                                <text x="768" y="557" fontSize="11" fill="#000" fontFamily="Liberation Sans" fontWeight="bold">W</text>
                            </svg>
                        </div>
                    </div>
                    <div className="mt-[4px] flex pl-[3px]">
                        <DocTab label="Untitled_0*" active w="w-[92px]" />
                        <DocTab label="Untitled_0*" alt w="w-[88px]" />
                        <DocTab label="2" w="w-[90px]" />
                        <DocTab label="2" alt w="w-[89px]" />
                    </div>
                </div>
            </div>

            {/* Bottom panes */}
            <div className="flex h-[66px] shrink-0 border-b-2 border-t-2 border-b-[#efefef] border-t-[#333]">
                <div className="flex w-[640px] shrink-0 pl-[5px]">
                    <div className="flex w-[15px] flex-col gap-[1px] pt-[3px]">
                        <SmallBtn label="x" />
                        <SmallBtn label="◂" />
                        <div className="mt-[2px] h-[30px] w-[5px] border-x border-[#eee]" />
                    </div>
                    <div className="flex flex-1 flex-col border-l border-t border-black">
                        <div className="flex h-[36px] border-b border-black">
                            <div className="flex w-[592px] flex-col">
                                <div className="flex h-[25px] items-stretch text-[14px]">
                                    <div className="flex w-[118px] items-center border-r border-[#eee] pl-[3px]">Name</div>
                                    <div className="flex w-[119px] items-center border-r border-[#eee] pl-[5px]">Value</div>
                                    <div className="flex w-[240px] items-center border-r border-[#eee] pl-[3px]">Description</div>
                                    <div className="flex w-[115px] items-center pl-[3px]">Type</div>
                                </div>
                                <div className="flex h-[10px] overflow-hidden">
                                    <div className="w-[118px] border-r border-dotted border-[#aaa] bg-white" />
                                    <div className="w-[119px] border-r border-dotted border-[#aaa] bg-white" />
                                    <div className="w-[240px] border-r border-dotted border-[#aaa] bg-white" />
                                    <div className="w-[95px] bg-white pl-[3px] pt-[3px] text-[14px] leading-[14px]">Undefined</div>
                                    <div className="w-[20px] bg-[#b8b8b8]" />
                                </div>
                            </div>
                            <div className="flex w-[20px] flex-col">
                                <ScrollBtn up muted h="h-[20px]" />
                                <ScrollBtn muted h="h-[15px]" />
                            </div>
                        </div>
                        <div className="flex h-[24px]">
                            <div className={`flex h-[19px] w-[56px] items-center justify-center bg-white text-[14px] font-bold ${sans} [clip-path:polygon(0_0,100%_0,90%_100%,8%_100%)]`}>
                                Global
                            </div>
                        </div>
                    </div>
                </div>
                <div className="ml-[5px] flex flex-1 border-l-2 border-[#333] pl-[3px]">
                    <div className="flex w-[11px] flex-col gap-[1px] pt-[3px]">
                        <SmallBtn label="x" />
                        <SmallBtn label="◂" />
                        <div className="mt-[2px] h-[30px] w-[5px] border-x border-[#eee]" />
                    </div>
                    <div className="mt-[2px] flex h-[56px] w-[614px] border-l border-t border-black bg-white">
                        <div className="flex flex-1 flex-col text-[14px]">
                            <div className="ml-[26px] flex h-[23px] items-center border-b border-dotted border-[#999] pl-[3px]">Number of processors used: 1</div>
                            <div className="relative ml-[26px] flex h-[23px] items-center border-b border-dotted border-[#999] pl-[3px]">
                                Steady state energy criterion met, solver stopped.
                                <svg width="14" height="16" viewBox="0 0 14 16" className="absolute left-[-22px] top-[3px]">
                                    <path d="M7 1a6 6 0 1 1-1 12l-1 2-1-3A6 6 0 0 1 7 1z" fill="#fff" stroke="#666" />
                                    <text x="5" y="11" fontSize="11" fontWeight="bold" fill="#0000e0" fontFamily="Liberation Serif">i</text>
                                </svg>
                            </div>
                        </div>
                        <div className={`flex w-[20px] flex-col ${dither}`}>
                            <ScrollBtn up h="h-[21px]" />
                            <div className="flex-1" />
                            <ScrollBtn h="h-[19px]" />
                        </div>
                    </div>
                </div>
            </div>

            {/* Status bar */}
            <div className="flex flex-1 items-center justify-between pl-[2px] pt-[2px] text-[14px]">
                <span>Select a face center</span>
                <div className="flex items-center gap-[3px]">
                    <StatusCell label="Raster=20.000" w="w-[97px] tracking-[0.8px]" />
                    <StatusCell label="Meshcells=13,312" w="w-[116px]" />
                    <StatusCell label="Normal" w="w-[56px]" />
                    <StatusCell label="mm" w="w-[34px]" />
                    <StatusCell label="GHz" w="w-[40px]" />
                    <StatusCell label="s" w="w-[17px]" />
                </div>
            </div>

            {/* Tooltip */}
            <div className="absolute left-[326px] top-[208px] flex h-[19px] w-[115px] items-center justify-center whitespace-nowrap border border-black bg-white text-[14px] tracking-[0.2px]">
                Pick face center (a)
            </div>
        </div>
    );
}
